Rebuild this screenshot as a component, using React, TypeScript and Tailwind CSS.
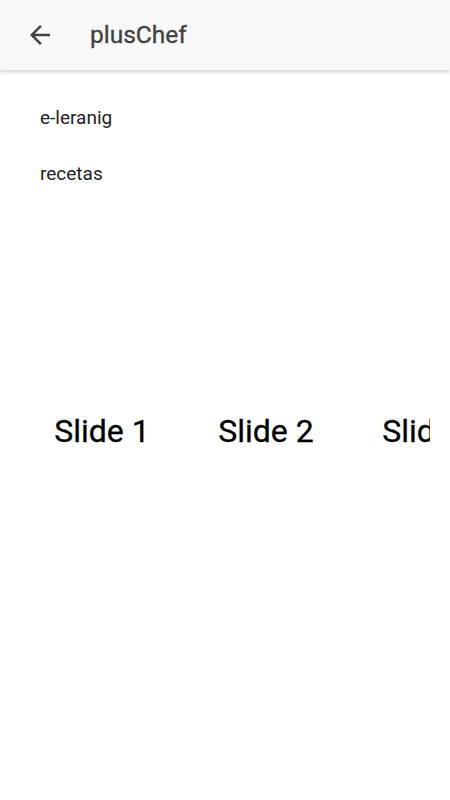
const slides = ["Slide 1", "Slide 2", "Slide 3"];

export default function App() {
  return (
    <div className="min-h-[800px] bg-white font-['Roboto',sans-serif]">
      <header className="flex h-[70px] items-center bg-[#f8f8f8] shadow-[0_2px_4px_rgba(0,0,0,0.18)]">
        <button className="ml-[25px] flex h-[30px] w-[30px] items-center justify-center text-[#424242]">
          <svg viewBox="0 0 24 24" className="h-[30px] w-[30px]" fill="currentColor">
            <path d="M20 11H7.83l5.59-5.59L12 4l-8 8 8 8 1.41-1.41L7.83 13H20v-2z" />
          </svg>
        </button>
        <h1 className="ml-[35px] text-[24.5px] font-normal text-[#424242] [-webkit-text-stroke:0.35px_#424242]">plusChef</h1>
      </header>

      <ul className="mt-[35px] flex flex-col gap-[30px] px-10 text-[19px] text-[#222]">
        <li className="leading-[26px]">e-leranig</li>
        <li className="leading-[26px]">recetas</li>
      </ul>

      <div className="mx-5 mt-[214px] flex overflow-hidden">
        {slides.map((s) => (
          <div key={s} className="flex h-[60px] w-[164px] shrink-0 items-center justify-center text-[32px] text-black [-webkit-text-stroke:0.3px_black]">
            {s}
          </div>
        ))}
      </div>
    </div>
  );
}
